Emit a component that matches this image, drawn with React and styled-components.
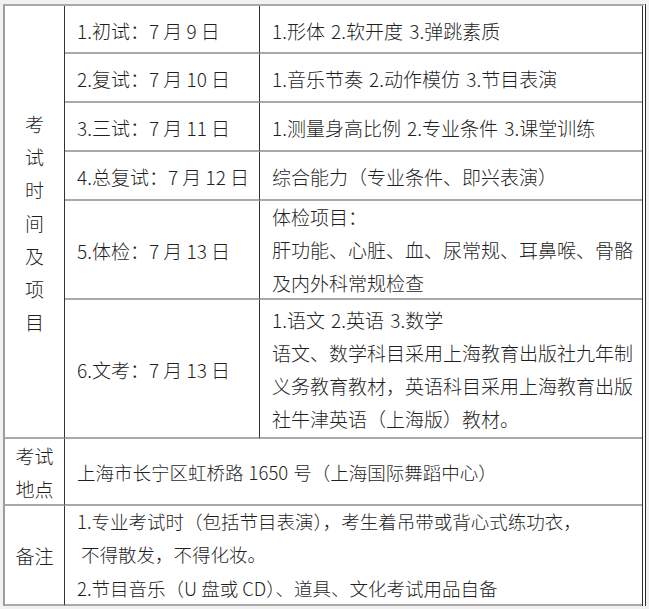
import React from 'react';
import styled, { createGlobalStyle } from 'styled-components';

const Global = createGlobalStyle`
  html, body { margin: 0; padding: 0; background: #f1f1f1; }
  body {
    font-family: "Noto Sans CJK SC", "Noto Sans", sans-serif;
    font-weight: 300;
    color: #1f1f1f;
  }
`;

const Page = styled.div`
  padding: 4px 0 0 3px;
`;

const Table = styled.div`
  display: grid;
  box-sizing: border-box;
  width: 643px;
  grid-template-columns: 60px 195px 1fr;
  grid-template-rows: 48px 49px 49px 49px 99px 139px 67px 100px;
  background: #fff;
  border-top: 2px solid #a9a9a9;
  border-left: 2px solid #9d9d9d;
  border-right: 4px double #2e2e2e;
`;

const Cell = styled.div`
  box-sizing: border-box;
  display: flex;
  align-items: center;
  justify-content: ${(p) => (p.$center ? 'center' : 'flex-start')};
  padding: ${(p) => (p.$center ? '0' : '0 8px 0 12px')};
  border-bottom: 2px solid #a9a9a9;
  border-right: ${(p) => (p.$last ? 'none' : '1px solid #333')};
  font-size: ${(p) => p.$size || 19}px;
  grid-row: ${(p) => p.$rows || 'auto'};
  grid-column: ${(p) => p.$cols || 'auto'};
`;

const Label = styled.div`
  width: ${(p) => p.$chars || 1}em;
  text-align: center;
  line-height: ${(p) => p.$lh || 33}px;
  padding-top: ${(p) => p.$shift || 0}px;
`;

const Lines = styled.div`
  line-height: ${(p) => p.$lh || 33}px;
  padding-top: ${(p) => p.$shift || 0}px;
`;

const Line = styled.div`
  white-space: pre;
  word-spacing: ${(p) => p.$ws || 0}px;
`;

const schedule = [
  { date: '1.初试：7 月 9 日', items: ['1.形体 2.软开度 3.弹跳素质'] },
  { date: '2.复试：7 月 10 日', items: ['1.音乐节奏 2.动作模仿 3.节目表演'] },
  { date: '3.三试：7 月 11 日', items: ['1.测量身高比例 2.专业条件 3.课堂训练'] },
  { date: '4.总复试：7 月 12 日', items: ['综合能力（专业条件、即兴表演）'] },
  {
    date: '5.体检：7 月 13 日',
    items: ['体检项目：', '肝功能、心脏、血、尿常规、耳鼻喉、骨骼', '及内外科常规检查'],
  },
  {
    date: '6.文考：7 月 13 日',
    items: [
      '1.语文 2.英语 3.数学',
      '语文、数学科目采用上海教育出版社九年制',
      '义务教育教材，英语科目采用上海教育出版',
      '社牛津英语（上海版）教材。',
    ],
  },
];

export default function App() {
  return (
    <>
      <Global />
      <Page>
        <Table>
          <Cell $center $rows="1 / span 6">
            <Label $shift={2}>考试时间及项目</Label>
          </Cell>
          {schedule.map((row) => (
            <React.Fragment key={row.date}>
              <Cell>
                <Lines $shift={2}>
                  <Line>{row.date}</Line>
                </Lines>
              </Cell>
              <Cell $last>
                <Lines $shift={row.items.length > 1 ? 0 : 2}>
                  {row.items.map((t) => (
                    <Line key={t} $ws={2}>
                      {t}
                    </Line>
                  ))}
                </Lines>
              </Cell>
            </React.Fragment>
          ))}
          <Cell $center>
            <Label $chars={2}>考试地点</Label>
          </Cell>
          <Cell $last $cols="2 / span 2" $size={18.5}>
            <Lines $shift={2}>
              <Line $ws={1}>上海市长宁区虹桥路 1650 号（上海国际舞蹈中心）</Line>
            </Lines>
          </Cell>
          <Cell $center>
            <Label $chars={2}>备注</Label>
          </Cell>
          <Cell $last $cols="2 / span 2" $size={18.5}>
            <Lines $lh={33.5}>
              <Line>1.专业考试时（包括节目表演），考生着吊带或背心式练功衣，</Line>
              <Line> 不得散发，不得化妆。</Line>
              <Line>2.节目音乐（U 盘或 CD）、道具、文化考试用品自备</Line>
            </Lines>
          </Cell>
        </Table>
      </Page>
    </>
  );
}
